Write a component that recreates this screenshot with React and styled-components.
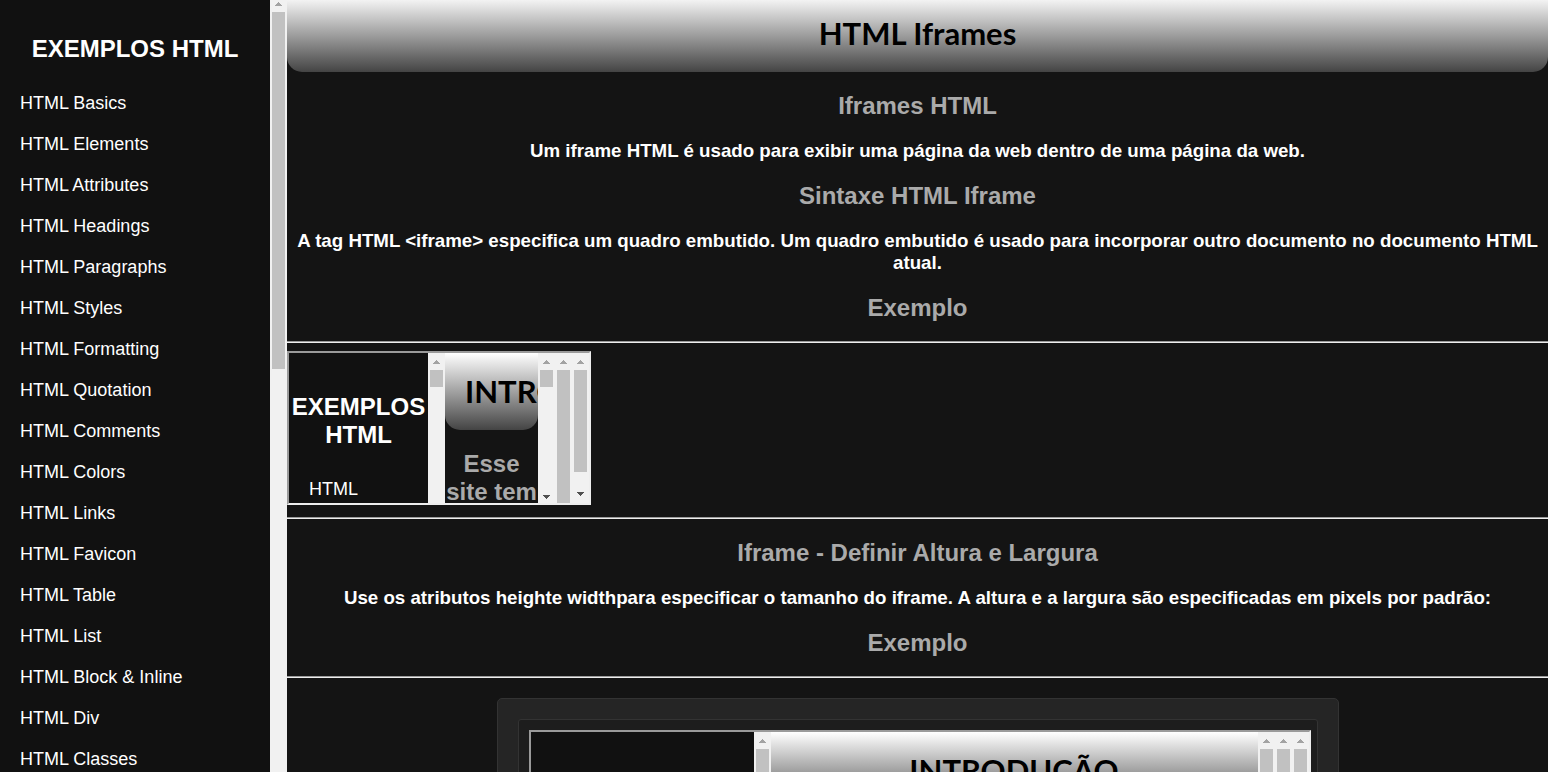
import React from "react";
import styled, { createGlobalStyle } from "styled-components";

const GlobalStyle = createGlobalStyle`
  *, *::before, *::after { box-sizing: border-box; }
  body {
    margin: 0;
    background: #141414;
    color: #fff;
    font-family: "Liberation Sans", Arial, sans-serif;
    overflow: hidden;
  }
`;

const Page = styled.div`
  display: flex;
  height: 100vh;
  overflow: hidden;
`;

const Sidebar = styled.aside`
  display: flex;
  flex: none;
`;

const Menu = styled.nav`
  flex: none;
  width: ${(p) => p.$width || "270px"};
  padding-top: ${(p) => p.$top || "35px"};
  background: #111;
  overflow: hidden;
`;

const MenuTitle = styled.h2`
  margin: 0 0 20px;
  font-size: 24px;
  line-height: 28px;
  text-align: center;
`;

const MenuLink = styled.a`
  display: block;
  padding: 10px 20px;
  color: #fff;
  font-size: 18px;
  line-height: 21px;
  text-decoration: none;
`;

const Main = styled.main`
  flex: 1;
  min-width: 0;
  overflow: hidden;
`;

const Banner = styled.header`
  padding: ${(p) => p.$top || "20px"} 20px 20px;
  border-radius: 0 0 15px 15px;
  background: linear-gradient(${(p) => p.$from || "#fff"}, #444);
  color: #000;
  text-align: center;
  overflow: hidden;
`;

const BannerTitle = styled.h1`
  margin: 0;
  font-family: "Trebuchet MS", Lato, sans-serif;
  font-size: 31px;
  font-weight: 700;
  line-height: 37px;
`;

const Subtitle = styled.h2`
  margin: 20px 0 19px;
  color: #aaa;
  font-size: 24px;
  line-height: 28px;
  text-align: center;
`;

const Text = styled.h3`
  margin: 20px 0;
  line-height: 22px;
  text-align: center;
`;

const Rule = styled.hr`
  margin: 8px 0;
  border: 0;
  border-top: 1px solid #9a9a9a;
  border-bottom: 1px solid #eee;
`;

const Frame = styled.section`
  display: flex;
  width: ${(p) => p.$width};
  height: ${(p) => p.$height};
  margin-bottom: 12px;
  border: 2px solid;
  border-color: #9a9a9a #eee #eee #9a9a9a;
  overflow: hidden;
`;

const FrameBody = styled.div`
  flex: 1;
  min-width: 0;
  overflow: hidden;
  background: #141414;
`;

const Track = styled.div`
  display: flex;
  flex: none;
  flex-direction: column;
  width: 17px;
  padding: 0 2px;
  background: #f1f1f1;
`;

const Thumb = styled.div`
  height: ${(p) => p.$size};
  flex: ${(p) => (p.$size ? "none" : "1")};
  background: #c1c1c1;
`;

const Arrow = styled.svg`
  display: block;
  flex: none;
  width: 13px;
  height: ${(p) => p.$height};
  margin-top: ${(p) => (p.$end ? "auto" : "0")};
`;

const Card = styled.div`
  max-width: 842px;
  margin: 20px auto;
  padding: 20px;
  border: 1px solid #333;
  border-radius: 5px;
  background: #252525;
`;

const CardInner = styled.div`
  padding: 10px 6px 10px 10px;
  border: 1px solid #333;
  border-radius: 3px;
  background: #1d1d1d;
`;

function ScrollBar({ size, end, clipped }) {
  return (
    <Track aria-hidden="true">
      <Arrow
        $height={clipped ? "12px" : "17px"}
        viewBox={clipped ? "0 5 13 12" : "0 0 13 17"}
        shapeRendering="crispEdges"
      >
        <path d="M6 7h1v1h1v1h1v1h1v1H3v-1h1V9h1V8h1z" fill="#a3a3a3" />
      </Arrow>
      <Thumb $size={size} />
      {end && (
        <Arrow $end $height={end} viewBox="0 0 13 17" preserveAspectRatio="xMidYMin slice" shapeRendering="crispEdges">
          <path d="M3 6h7v1H9v1H8v1H7v1H6V9H5V8H4V7H3z" fill="#505050" />
        </Arrow>
      )}
    </Track>
  );
}

const topics = [
  "Basics", "Elements", "Attributes", "Headings", "Paragraphs", "Styles",
  "Formatting", "Quotation", "Comments", "Colors", "Links", "Favicon",
  "Table", "List", "Block & Inline", "Div", "Classes",
];

export default function App() {
  return (
    <>
      <GlobalStyle />
      <Page>
        <Sidebar>
          <Menu>
            <MenuTitle>EXEMPLOS HTML</MenuTitle>
            {topics.map((topic) => (
              <MenuLink href="#" key={topic}>HTML {topic}</MenuLink>
            ))}
          </Menu>
          <ScrollBar size="357px" clipped />
        </Sidebar>
        <Main>
          <Banner $top="15px" $from="#f3f3f3">
            <BannerTitle>HTML Iframes</BannerTitle>
          </Banner>
          <Subtitle>Iframes HTML</Subtitle>
          <Text>Um iframe HTML é usado para exibir uma página da web dentro de uma página da web.</Text>
          <Subtitle>Sintaxe HTML Iframe</Subtitle>
          <Text>
            A tag HTML &lt;iframe&gt; especifica um quadro embutido. Um quadro embutido é usado para
            incorporar outro documento no documento HTML atual.
          </Text>
          <Subtitle>Exemplo</Subtitle>
          <Rule />
          <Frame $width="304px" $height="154px">
            <Menu $width="139px" $top="40px">
              <MenuTitle>EXEMPLOS HTML</MenuTitle>
              <MenuLink href="#">HTML</MenuLink>
            </Menu>
            <ScrollBar size="17px" />
            <FrameBody>
              <Banner>
                <BannerTitle>INTRODUÇÃO</BannerTitle>
              </Banner>
              <Subtitle>Esse site tem</Subtitle>
            </FrameBody>
            <ScrollBar size="17px" end="14px" />
            <ScrollBar />
            <ScrollBar size="102px" end="17px" />
          </Frame>
          <Rule />
          <Subtitle>Iframe - Definir Altura e Largura</Subtitle>
          <Text>
            Use os atributos heighte widthpara especificar o tamanho do iframe. A altura e a largura
            são especificadas em pixels por padrão:
          </Text>
          <Subtitle>Exemplo</Subtitle>
          <Rule />
          <Card>
            <CardInner>
              <Frame $width="100%" $height="400px">
                <Menu $width="223px" $top="40px">
                  <MenuTitle>EXEMPLOS HTML</MenuTitle>
                </Menu>
                <ScrollBar />
                <FrameBody>
                  <Banner>
                    <BannerTitle>INTRODUÇÃO</BannerTitle>
                  </Banner>
                </FrameBody>
                <ScrollBar />
                <ScrollBar />
                <ScrollBar />
              </Frame>
            </CardInner>
          </Card>
        </Main>
      </Page>
    </>
  );
}
